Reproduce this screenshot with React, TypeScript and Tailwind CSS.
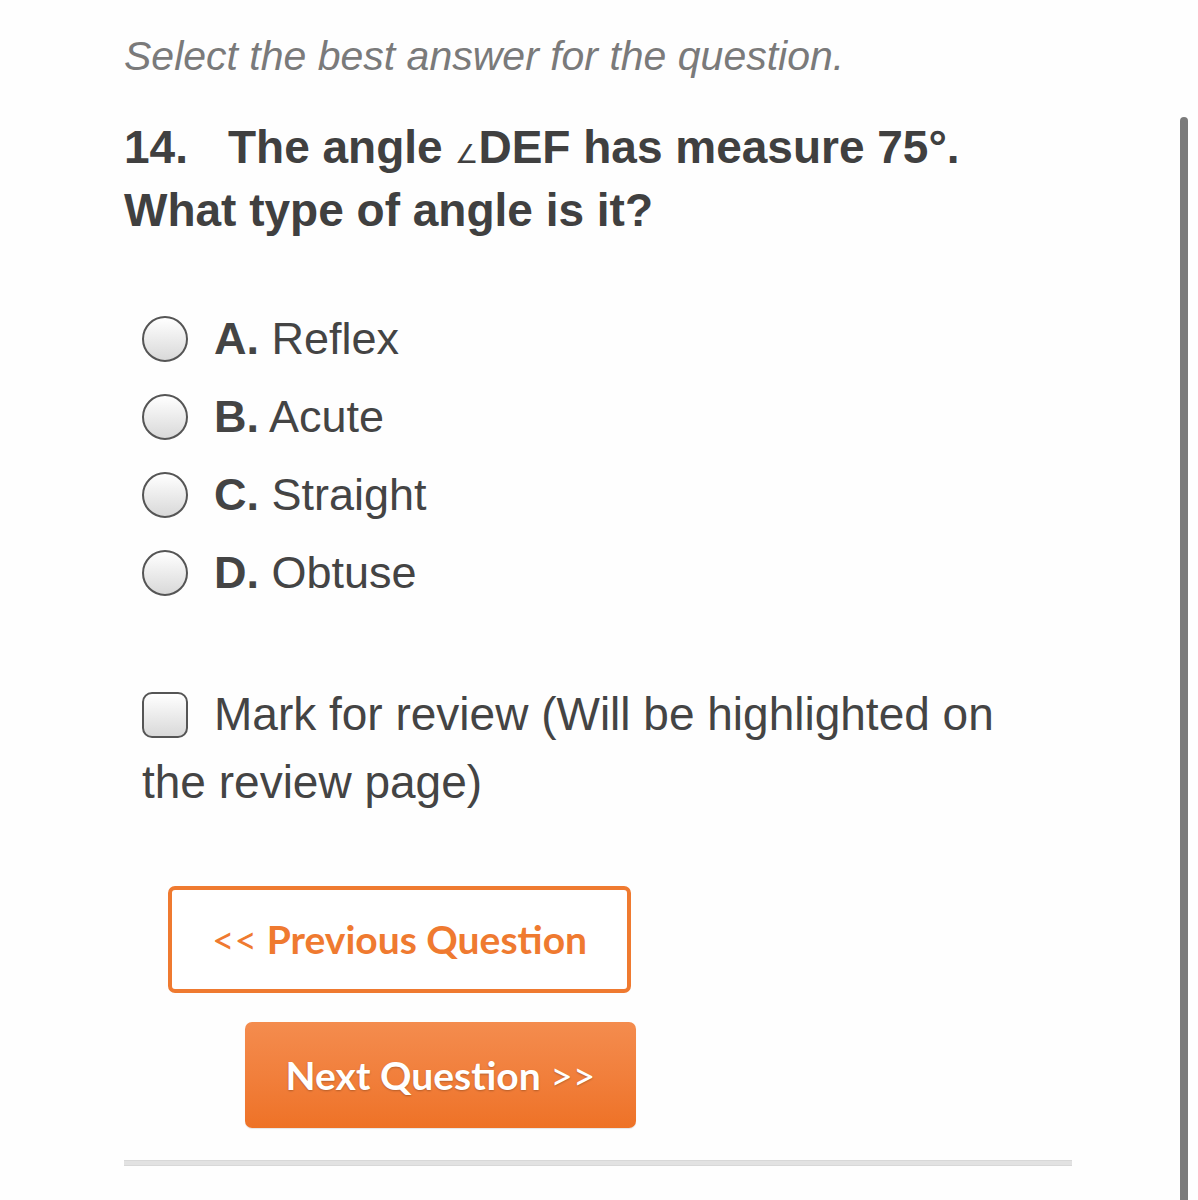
import React from "react";

const options = [
    { letter: "A.", text: "Reflex" },
    { letter: "B.", text: "Acute" },
    { letter: "C.", text: "Straight" },
    { letter: "D.", text: "Obtuse" },
];

const Radio = () => (
    <span className="inline-block w-[46px] h-[46px] rounded-full border-2 border-[#555] bg-gradient-to-b from-white to-[#d9d9d9] shrink-0" />
);

export default function App() {
    return (
        <div className="relative min-h-[1200px] bg-[#fefefe] font-['Liberation_Sans',Arial,sans-serif] text-[#444] overflow-hidden">
            <div className="pl-[124px] pr-[126px] pt-[33px]">
                <p className="italic text-[#7a7a7a] text-[41px] leading-[46px]">
                    Select the best answer for the question.
                </p>

                <h2 className="mt-[37px] font-bold text-[46px] leading-[63px] text-[#404040]">
                    <span className="mr-[40px]">14.</span>
                    The angle <span className="text-[26px] leading-none font-normal">∠</span>DEF has measure 75°.
                    <br />
                    What type of angle is it?
                </h2>

                {/* answers */}
                <div className="mt-[58px] pl-[18px]">
                    {options.map((o) => (
                        <label key={o.letter} className="flex items-center h-[78px] text-[45px]">
                            <Radio />
                            <span className="ml-[26px]">
                                <span className="font-bold">{o.letter}</span> {o.text}
                            </span>
                        </label>
                    ))}
                </div>

                <p className="mt-[68px] pl-[18px] pr-[40px] text-[46px] leading-[68px]">
                    <span className="inline-block w-[46px] h-[46px] rounded-[10px] border-2 border-[#555] bg-gradient-to-b from-white to-[#d9d9d9] align-[-8px] mr-[26px]" />
                    Mark for review (Will be highlighted on the review page)
                </p>

                <div className="mt-[70px] flex flex-col items-start font-['Lato',sans-serif] font-bold text-[39px]">
                    <button className="ml-[44px] w-[463px] h-[107px] border-[4px] border-[#ef7a30] rounded-[7px] bg-white text-[#ef7a30]">
                        <span className="font-normal">&lt;&lt;</span> Previous Question
                    </button>
                    <button className="mt-[29px] ml-[121px] w-[391px] h-[106px] rounded-[7px] bg-gradient-to-b from-[#f48c4e] to-[#ee7226] text-white [text-shadow:0_1px_2px_rgba(0,0,0,0.25)] shadow-[0_1px_1px_rgba(0,0,0,0.1)]">
                        Next Question <span className="font-normal">&gt;&gt;</span>
                    </button>
                </div>

                <div className="mt-[32px] h-[6px] bg-[#e2e2e2] border-y border-[#d8d8d8] w-[948px]" />
            </div>

            {/* scrollbar */}
            <div className="absolute right-[10px] top-[117px] bottom-0 w-[8px] rounded-t-full bg-[#7b7b7b]" />
        </div>
    );
}
